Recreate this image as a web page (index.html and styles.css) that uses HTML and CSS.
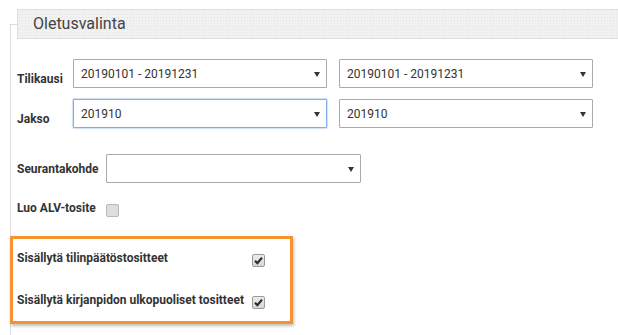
FILE: index.html
```html
<!DOCTYPE html>
<html lang="fi">
<head>
    <meta charset="UTF-8">
    <title>Oletusvalinta</title>
    <link rel="stylesheet" href="styles.css">
</head>
<body>
    <fieldset class="panel">
        <legend class="panel-title">Oletusvalinta</legend>

        <!-- Tilikausi / Jakso -->
        <div class="group period-group">
            <div class="row">
                <label class="row-label" for="tilikausi-a">Tilikausi</label>
                <span class="select">
                    <select id="tilikausi-a"><option>20190101 - 20191231</option></select>
                </span>
                <span class="select">
                    <select id="tilikausi-b"><option>20190101 - 20191231</option></select>
                </span>
            </div>
            <div class="row">
                <label class="row-label" for="jakso-a">Jakso</label>
                <span class="select focused">
                    <select id="jakso-a"><option>201910</option></select>
                </span>
                <span class="select">
                    <select id="jakso-b"><option>201910</option></select>
                </span>
            </div>
        </div>

        <!-- Seurantakohde / ALV -->
        <div class="group target-group">
            <div class="row centered">
                <label class="row-label wide" for="seuranta">Seurantakohde</label>
                <span class="select long">
                    <select id="seuranta"><option></option></select>
                </span>
            </div>
            <div class="row check-row">
                <span class="row-label wide">Luo ALV-tosite</span>
                <span class="box disabled"></span>
            </div>
        </div>

        <!-- Highlighted options -->
        <div class="highlight">
            <span class="opt-label">Sisällytä tilinpäätöstositteet</span>
            <span class="box checked">
                <svg width="11" height="11" viewBox="0 0 11 11"><path d="M2 5.8 L4.4 8.2 L9 2.6" fill="none" stroke="#2b2b2b" stroke-width="2.2"/></svg>
            </span>
            <span class="opt-label">Sisällytä kirjanpidon ulkopuoliset tositteet</span>
            <span class="box checked">
                <svg width="11" height="11" viewBox="0 0 11 11"><path d="M2 5.8 L4.4 8.2 L9 2.6" fill="none" stroke="#2b2b2b" stroke-width="2.2"/></svg>
            </span>
        </div>
    </fieldset>
</body>
</html>
```

FILE: styles.css
```css
* {
    box-sizing: border-box;
}

body {
    margin: 0;
    background: #fff;
    color: #333;
    font-family: Roboto, 'Liberation Sans', sans-serif;
    overflow: hidden;
}

.panel {
    margin: 9px 0 0 10px;
    padding: 0 0 0 6px;
    width: calc(100% - 10px);
    height: calc(100vh - 9px);
    border: 1px solid #ddd;
    border-right: none;
    border-bottom: none;
}

.panel-title {
    width: 100%;
    margin: 0;
    padding: 0 15px;
    line-height: 28px;
    font-size: 16px;
    color: #444;
    border: 1px solid #ddd;
    border-right: none;
    background-color: #f1f1f1;
    background-image: radial-gradient(#e2e2e2 0.6px, transparent 0.8px);
    background-size: 3px 3px;
}

.group {
    display: flex;
    flex-direction: column;
}

.period-group {
    margin-top: 20px;
    gap: 11px;
}

.target-group {
    margin-top: 26px;
}

.row {
    display: flex;
    align-items: flex-end;
    gap: 12px;
}

.row.centered {
    align-items: center;
    gap: 0;
}

.row-label {
    width: 44px;
    padding-bottom: 2px;
    font-size: 12px;
    font-weight: bold;
    line-height: 14px;
    color: #333;
}

.row-label.wide {
    width: 89px;
    padding-bottom: 0;
}

.select {
    position: relative;
    display: block;
    width: 254px;
    height: 29px;
}

.select.long {
    width: 255px;
}

.select select {
    appearance: none;
    -webkit-appearance: none;
    width: 100%;
    height: 100%;
    padding: 0 7px;
    border: 1px solid #aaa;
    border-radius: 1px;
    background: #fff;
    font-family: Roboto, 'Liberation Sans', sans-serif;
    font-size: 12px;
    color: #333;
    outline: none;
}

.select.focused select {
    border-color: #82aae4;
    box-shadow: 0 0 1px 1px rgba(130, 170, 228, 0.35);
}

.select::after {
    content: '';
    position: absolute;
    right: 7px;
    top: 13px;
    border-left: 3px solid transparent;
    border-right: 3px solid transparent;
    border-top: 5px solid #333;
    pointer-events: none;
}

.check-row {
    margin-top: 19px;
    align-items: flex-start;
    gap: 0;
}

.check-row .row-label {
    line-height: 13px;
}

.check-row .box {
    margin-top: 2px;
}

.box {
    display: flex;
    align-items: center;
    justify-content: center;
    width: 13px;
    height: 13px;
    border: 1px solid #9a9a9a;
    border-radius: 2px;
    background: linear-gradient(#ececec, #d6d6d6);
}

.box.disabled {
    border-color: #b8b8b8;
    background-color: #e8e8e8;
    background-image: radial-gradient(#d0d0d0 0.6px, transparent 0.8px);
    background-size: 2px 2px;
}

.highlight {
    display: grid;
    grid-template-columns: 235px 13px;
    align-items: start;
    row-gap: 27px;
    width: 283px;
    margin: 19px 0 0 -7px;
    padding: 13px 0 12px 4px;
    border: 3px solid #f7932f;
    box-shadow: 1px 2px 3px rgba(0, 0, 0, 0.25);
}

.highlight .box {
    margin-top: 2px;
}

.opt-label {
    font-size: 12px;
    font-weight: bold;
    line-height: 13px;
    color: #333;
}
```
